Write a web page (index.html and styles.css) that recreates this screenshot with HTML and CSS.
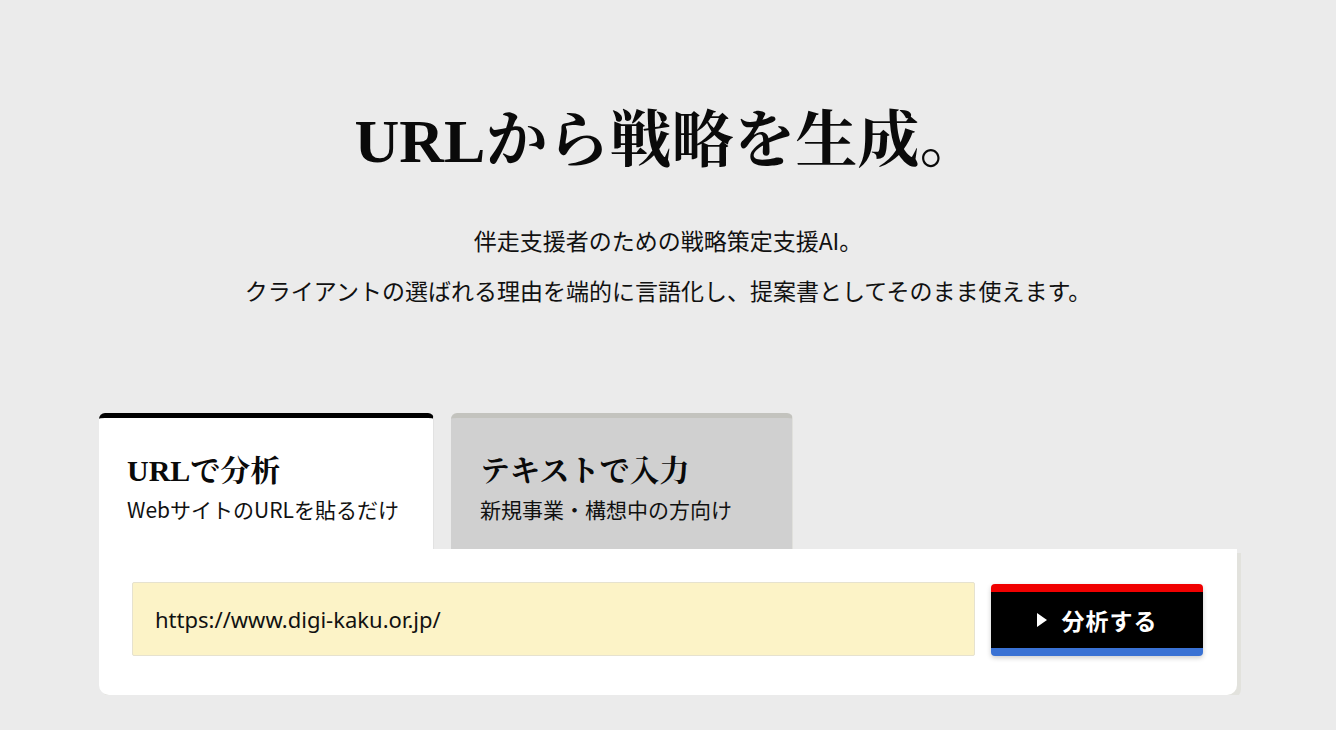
FILE: index.html
```html
<!DOCTYPE html>
<html lang="ja">
<head>
<meta charset="utf-8">
<title>URLから戦略を生成。</title>
<link rel="stylesheet" href="styles.css">
</head>
<body>
<main class="page">
  <header class="hero">
    <h1 class="title">URLから戦略を生成。</h1>
    <p class="lead">伴走支援者のための戦略策定支援AI。</p>
    <p class="lead">クライアントの選ばれる理由を端的に言語化し、提案書としてそのまま使えます。</p>
  </header>

  <section class="card">
    <div class="tabs">
      <div class="tab tab-active">
        <div class="tab-title">URLで分析</div>
        <div class="tab-sub">WebサイトのURLを貼るだけ</div>
      </div>
      <div class="tab tab-inactive">
        <div class="tab-title">テキストで入力</div>
        <div class="tab-sub">新規事業・構想中の方向け</div>
      </div>
    </div>
    <div class="panel">
      <input class="url-input" type="text" value="https://www.digi-kaku.or.jp/">
      <button class="analyze-btn" type="button">
        <svg class="play" width="10" height="14" viewBox="0 0 10 14" aria-hidden="true"><polygon points="0,0 10,7 0,14" fill="#ffffff"/></svg>
        <span>分析する</span>
      </button>
    </div>
  </section>
</main>
</body>
</html>
```

FILE: styles.css
```css
html, body {
  margin: 0;
  padding: 0;
}
body {
  background: #ebebeb;
  color: #111;
  font-family: "Noto Sans CJK JP", "Noto Sans", sans-serif;
}
.page {
  width: 1138px;
  margin: 0 auto;
  padding-top: 104px;
}
.hero {
  text-align: center;
}
.title {
  margin: 0;
  font-family: "Liberation Serif", "Noto Serif CJK JP", "Noto Sans CJK JP", serif;
  font-weight: 700;
  font-size: 62px;
  line-height: 74px;
  color: #0a0a0a;
}
.lead {
  margin: 0;
  font-size: 23px;
  line-height: 50px;
  color: #111;
}
.title + .lead {
  margin-top: 37px;
}
.card {
  margin-top: 98px;
}
.tabs {
  display: flex;
  gap: 17px;
  align-items: flex-end;
}
.tab {
  box-sizing: border-box;
  height: 136px;
  padding: 33px 0 0 28px;
  border-radius: 6px 6px 0 0;
  border-top: 5px solid #000;
  border-right: 1px solid #e2e2e2;
}
.tab-active {
  width: 335px;
  background: #ffffff;
  border-top-color: #000000;
}
.tab-inactive {
  width: 342px;
  padding-left: 29px;
  background: #d0d0d0;
  border-top-color: #c3c3be;
  border-right-color: #e0e0dc;
}
.tab-title {
  font-family: "Liberation Serif", "Noto Serif CJK JP", "Noto Sans CJK JP", serif;
  font-weight: 700;
  font-size: 30px;
  line-height: 40px;
  color: #0a0a0a;
}
.tab-sub {
  margin-top: 3px;
  font-size: 21px;
  line-height: 30px;
  color: #111;
}
.panel {
  display: flex;
  align-items: flex-start;
  gap: 16px;
  height: 146px;
  box-sizing: border-box;
  padding: 33px 34px 0 33px;
  background: #ffffff;
  border-radius: 0 0 10px 10px;
  box-shadow: 4px 4px 0 #e2e2dd;
}
.url-input {
  box-sizing: border-box;
  width: 843px;
  height: 74px;
  margin: 0;
  padding: 0 22px;
  background: #fcf3c7;
  border: 1px solid #e6e2cf;
  border-radius: 2px;
  font-family: "Noto Sans", "Open Sans", sans-serif;
  font-size: 22px;
  color: #111;
  outline: none;
}
.analyze-btn {
  box-sizing: border-box;
  width: 212px;
  height: 72px;
  margin: 2px 0 0;
  padding: 0;
  display: flex;
  align-items: center;
  justify-content: center;
  gap: 15px;
  background: #000000;
  border: 0;
  border-top: 8px solid #f00000;
  border-bottom: 8px solid #3a72d4;
  border-radius: 4px;
  box-shadow: 0 2px 5px rgba(0, 0, 0, 0.2);
  color: #ffffff;
  font-family: "Noto Sans CJK JP", sans-serif;
  font-weight: 700;
  font-size: 23px;
  letter-spacing: 1px;
  cursor: pointer;
}
.play {
  display: block;
}
```
